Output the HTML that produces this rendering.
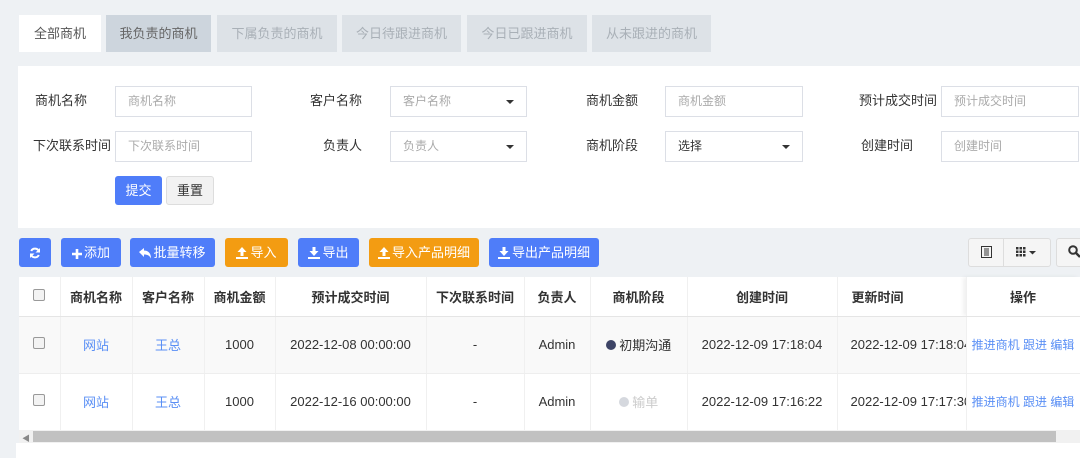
<!DOCTYPE html>
<html><head><meta charset="utf-8"><style>
*{box-sizing:border-box;margin:0;padding:0}
body{width:1080px;height:458px;overflow:hidden;background:#eef1f4;font-family:"Liberation Sans","Noto Sans CJK SC",sans-serif;font-size:13px;color:#333;position:relative}
.a{position:absolute}
.tab{position:absolute;top:15px;height:37px;line-height:37px;text-align:center;background:#dde2e7;color:#a9b0b7;font-size:13px}
.lbl{position:absolute;font-size:13px;color:#333;text-align:right;width:90px;line-height:30px}
.inp{position:absolute;height:31px;border:1px solid #dcdfe6;background:#fff;color:#aaa;font-size:12px;line-height:29px;padding-left:12px}
.caret{position:absolute;right:12px;top:13px;border-left:4px solid transparent;border-right:4px solid transparent;border-top:4px solid #333}
.btn{position:absolute;top:238px;height:29px;line-height:29px;border-radius:3px;color:#fff;font-size:13px;text-align:center;background:#4f7df9}
.btn svg{vertical-align:-2px;margin-right:2px}
.or{background:#f39c12}
th,td{font-size:13px;text-align:center;border-right:1px solid #f0f0f0}
th{font-weight:bold;height:39px;border-bottom:1px solid #e5e5e5}
td{height:57px;border-bottom:1px solid #eee}
.lk{color:#5a8ff5}
.cb{display:inline-block;width:12px;height:12px;border:1px solid #999;border-radius:2px;background:#f3f3f3}
</style></head><body>
<div class="tab" style="left:19px;width:82px;background:#fff;color:#555">全部商机</div>
<div class="tab" style="left:106px;width:105px;background:#cdd5dd;color:#666">我负责的商机</div>
<div class="tab" style="left:217px;width:120px">下属负责的商机</div>
<div class="tab" style="left:342px;width:119px">今日待跟进商机</div>
<div class="tab" style="left:467px;width:120px">今日已跟进商机</div>
<div class="tab" style="left:592px;width:119px">从未跟进的商机</div>

<div class="a" style="left:18px;top:66px;width:1062px;height:162px;background:#fff"></div>
<div class="lbl" style="left:-3px;top:86px">商机名称</div>
<div class="inp" style="left:115px;top:86px;width:137px">商机名称</div>
<div class="lbl" style="left:272px;top:86px">客户名称</div>
<div class="inp" style="left:390px;top:86px;width:137px">客户名称<span class="caret"></span></div>
<div class="lbl" style="left:548px;top:86px">商机金额</div>
<div class="inp" style="left:665px;top:86px;width:138px">商机金额</div>
<div class="lbl" style="left:847px;top:86px">预计成交时间</div>
<div class="inp" style="left:941px;top:86px;width:138px">预计成交时间</div>
<div class="lbl" style="left:21px;top:131px">下次联系时间</div>
<div class="inp" style="left:115px;top:131px;width:137px">下次联系时间</div>
<div class="lbl" style="left:272px;top:131px">负责人</div>
<div class="inp" style="left:390px;top:131px;width:137px">负责人<span class="caret"></span></div>
<div class="lbl" style="left:548px;top:131px">商机阶段</div>
<div class="inp" style="left:665px;top:131px;width:138px;color:#333">选择<span class="caret"></span></div>
<div class="lbl" style="left:823px;top:131px">创建时间</div>
<div class="inp" style="left:941px;top:131px;width:138px">创建时间</div>
<div class="a" style="left:115px;top:176px;width:47px;height:29px;line-height:29px;background:#4f7df9;color:#fff;text-align:center;border-radius:3px">提交</div>
<div class="a" style="left:166px;top:176px;width:48px;height:29px;line-height:27px;background:#f2f2f2;border:1px solid #ddd;text-align:center;border-radius:3px">重置</div>

<div class="btn" style="left:19px;width:32px"><svg width="12" height="12" viewBox="0 0 12 12" style="margin:0"><path d="M10 4.5A4.2 4.2 0 0 0 2.2 4M2 7.5A4.2 4.2 0 0 0 9.8 8" stroke="#fff" stroke-width="2" fill="none"/><path d="M11 1v4.5H6.5zM1 11V6.5h4.5z" fill="#fff"/></svg></div>
<div class="btn" style="left:61px;width:60px"><svg width="10" height="10"><path d="M5 0v10M0 5h10" stroke="#fff" stroke-width="2.6"/></svg>添加</div>
<div class="btn" style="left:130px;width:85px"><svg width="12" height="11"><path d="M0 4l5-4v2.5c4 0 7 2.5 7 8c-1.5-3-3.5-4-7-4V9z" fill="#fff"/></svg>批量转移</div>
<div class="btn or" style="left:225px;width:63px"><svg width="12" height="12"><path d="M6 0l4.5 5H7.5v4h-3V5H1.5zM0 10h12v2H0z" fill="#fff"/></svg>导入</div>
<div class="btn" style="left:298px;width:61px"><svg width="12" height="12"><path d="M6 9L1.5 4h3V0h3v4h3zM0 10h12v2H0z" fill="#fff"/></svg>导出</div>
<div class="btn or" style="left:369px;width:110px"><svg width="12" height="12"><path d="M6 0l4.5 5H7.5v4h-3V5H1.5zM0 10h12v2H0z" fill="#fff"/></svg>导入产品明细</div>
<div class="btn" style="left:489px;width:110px"><svg width="12" height="12"><path d="M6 9L1.5 4h3V0h3v4h3zM0 10h12v2H0z" fill="#fff"/></svg>导出产品明细</div>
<div class="a" style="left:968px;top:238px;width:83px;height:29px;border:1px solid #ddd;border-radius:3px;background:#f5f5f5"></div>
<div class="a" style="left:1003px;top:238px;width:1px;height:29px;background:#ddd"></div>
<svg class="a" style="left:981px;top:246px" width="11" height="12"><rect x="0.5" y="0.5" width="10" height="11" fill="none" stroke="#333"/><path d="M3 3h5M3 5h5M3 7h5M3 9h5" stroke="#333"/></svg>
<svg class="a" style="left:1016px;top:247px" width="22" height="10"><g fill="#333"><rect x="0" y="0" width="2.5" height="2.5"/><rect x="3.5" y="0" width="2.5" height="2.5"/><rect x="7" y="0" width="2.5" height="2.5"/><rect x="0" y="3.5" width="2.5" height="2.5"/><rect x="3.5" y="3.5" width="2.5" height="2.5"/><rect x="7" y="3.5" width="2.5" height="2.5"/><rect x="0" y="7" width="2.5" height="2.5"/><rect x="3.5" y="7" width="2.5" height="2.5"/><rect x="7" y="7" width="2.5" height="2.5"/><path d="M13 4h7l-3.5 3.5z"/></g></svg>
<div class="a" style="left:1056px;top:238px;width:30px;height:29px;border:1px solid #ddd;border-radius:3px;background:#f5f5f5"></div>
<svg class="a" style="left:1068px;top:245px" width="13" height="14"><circle cx="5" cy="5" r="3.8" fill="none" stroke="#333" stroke-width="2"/><path d="M8 8l4 4" stroke="#333" stroke-width="2.4"/></svg>

<div class="a" style="left:16px;top:443px;width:1064px;height:15px;background:#fff"></div>
<table class="a" style="left:19px;top:277px;width:1061px;border-collapse:collapse;background:#fff;table-layout:fixed">
<colgroup><col style="width:41px"><col style="width:72px"><col style="width:72px"><col style="width:71px"><col style="width:151px"><col style="width:98px"><col style="width:66px"><col style="width:97px"><col style="width:150px"><col style="width:129px"><col style="width:114px"></colgroup>
<tr><th><span class="cb"></span></th><th>商机名称</th><th>客户名称</th><th>商机金额</th><th>预计成交时间</th><th>下次联系时间</th><th>负责人</th><th>商机阶段</th><th>创建时间</th><th style="text-align:left;padding-left:14px">更新时间</th><th style="box-shadow:-3px 0 4px rgba(0,0,0,.06)">操作</th></tr>
<tr style="background:#f9f9f9"><td><span class="cb"></span></td><td class="lk">网站</td><td class="lk">王总</td><td>1000</td><td>2022-12-08 00:00:00</td><td>-</td><td>Admin</td><td><span style="display:inline-block;width:10px;height:10px;border-radius:50%;background:#3d4466"></span> 初期沟通</td><td>2022-12-09 17:18:04</td><td style="text-align:left;padding-left:13px;white-space:nowrap;overflow:hidden">2022-12-09 17:18:04</td><td class="lk" style="font-size:12px;white-space:nowrap;background:#fff;box-shadow:-3px 0 4px rgba(0,0,0,.06);overflow:hidden">推进商机 跟进 编辑</td></tr>
<tr><td><span class="cb"></span></td><td class="lk">网站</td><td class="lk">王总</td><td>1000</td><td>2022-12-16 00:00:00</td><td>-</td><td>Admin</td><td style="color:#ccc"><span style="display:inline-block;width:10px;height:10px;border-radius:50%;background:#d5d8de"></span> 输单</td><td>2022-12-09 17:16:22</td><td style="text-align:left;padding-left:13px;white-space:nowrap;overflow:hidden">2022-12-09 17:17:30</td><td class="lk" style="font-size:12px;white-space:nowrap;box-shadow:-3px 0 4px rgba(0,0,0,.06);overflow:hidden">推进商机 跟进 编辑</td></tr>
</table>
<div class="a" style="left:19px;top:430px;width:1061px;height:13px;background:#f1f1f1"></div>
<div class="a" style="left:22px;top:433px;font-size:8px;color:#888">◀</div>
<div class="a" style="left:33px;top:431px;width:1023px;height:11px;background:#c1c1c1"></div>
</body></html>
